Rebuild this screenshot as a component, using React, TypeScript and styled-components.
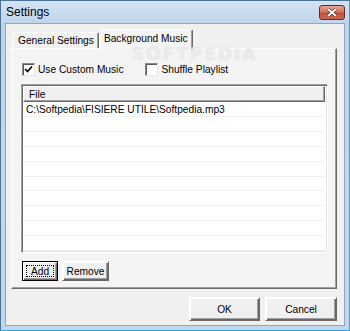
import React from 'react';
import styled, { createGlobalStyle } from 'styled-components';

const Global = createGlobalStyle`
  html, body { margin: 0; padding: 0; background: #ffffff; }
  body { font-family: Tahoma, "Liberation Sans", "DejaVu Sans", sans-serif; font-size: 10.2px; color: #000; }
  #root { width: 350px; height: 331px; }
`;

const Window = styled.div`
  position: relative;
  width: 350px;
  height: 331px;
  box-sizing: border-box;
  border: 1px solid #4b7397;
  border-right-color: #2fa6e0;
  border-bottom-color: #2fa6e0;
  background: linear-gradient(#d3e3f4, #bfd5ec 22px, #c2d7ee);
  display: flex;
  flex-direction: column;
  padding: 0 4px 4px 4px;
  overflow: hidden;
`;

const TitleBar = styled.div`
  height: 21px;
  display: flex;
  align-items: center;
  justify-content: space-between;
  padding: 0 0 1px 1px;
`;

const Title = styled.span`
  font-family: "Liberation Sans", "DejaVu Sans", sans-serif;
  font-size: 12px;
  color: #000;
`;

const CloseBtn = styled.div`
  width: 26px;
  height: 15px;
  box-sizing: border-box;
  border: 1px solid #5e2a26;
  border-radius: 3px;
  background: linear-gradient(#e8a898, #d8765f 45%, #c0503a 55%, #cf6a52);
  display: flex;
  align-items: center;
  justify-content: center;
  margin-top: 2px;
`;

const Client = styled.div`
  flex: 1;
  background: #f0f0f0;
  border: 1px solid #8ea6c0;
  display: flex;
  flex-direction: column;
  padding: 5px 7px 0 5px;
`;

const TabStrip = styled.div`
  display: flex;
  align-items: flex-end;
  height: 19px;
  padding-left: 1px;
  position: relative;
  z-index: 2;
`;

const Tab = styled.div<{ $active?: boolean }>`
  box-sizing: border-box;
  height: ${(p) => (p.$active ? '20px' : '16px')};
  margin-bottom: ${(p) => (p.$active ? '-1px' : '0')};
  padding: ${(p) => (p.$active ? '3px 4px 0 4px' : '2px 4px 0 5px')};
  background: ${(p) => (p.$active ? '#f4f4f4' : '#f0f0f0')};
  border-top: 1px solid #ffffff;
  border-left: 1px solid #ffffff;
  border-right: 1px solid #696969;
  box-shadow: inset -1px 0 0 #a0a0a0;
  border-radius: 2px 2px 0 0;
  white-space: nowrap;
  line-height: 12px;
`;

const Pane = styled.div`
  height: 241px;
  box-sizing: border-box;
  background: #f4f4f4;
  border-top: 1px solid #ffffff;
  border-left: 1px solid #ffffff;
  border-right: 1px solid #696969;
  border-bottom: 1px solid #696969;
  box-shadow: inset -1px -1px 0 #a0a0a0;
  padding: 14px 7px 0 9px;
  display: flex;
  flex-direction: column;
`;

const CheckRow = styled.div`
  display: flex;
  align-items: center;
  height: 13px;
  padding-left: 1px;
`;

const CheckItem = styled.label`
  display: flex;
  align-items: center;
  gap: 3px;
  margin-right: 22px;
`;

const Box = styled.span`
  width: 13px;
  height: 13px;
  box-sizing: border-box;
  background: #ffffff;
  border: 1px solid #8a8a8a;
  border-right-color: #e6e6e6;
  border-bottom-color: #e6e6e6;
  box-shadow: inset 1px 1px 0 #5a5a5a;
  display: flex;
  align-items: center;
  justify-content: center;
`;

const ListView = styled.div`
  margin-top: 8px;
  width: 307px;
  height: 169px;
  box-sizing: border-box;
  background: #ffffff;
  border: 1px solid #a0a0a0;
  border-right-color: #ffffff;
  border-bottom-color: #ffffff;
  box-shadow: inset 1px 1px 0 #696969, inset -1px -1px 0 #e3e3e3;
  padding: 1px 2px 1px 1px;
  display: flex;
  flex-direction: column;
`;

const Header = styled.div`
  height: 16px;
  box-sizing: border-box;
  background: #f0f0f0;
  border-top: 1px solid #ffffff;
  border-left: 1px solid #ffffff;
  border-right: 1px solid #696969;
  border-bottom: 1px solid #696969;
  box-shadow: inset -1px -1px 0 #a0a0a0;
  padding: 1px 0 0 5px;
  line-height: 13px;
`;

const Row = styled.div`
  height: 16px;
  box-sizing: border-box;
  border-bottom: 1px solid #f0f0f0;
  padding: 1px 0 0 3px;
  line-height: 13px;
  white-space: nowrap;
`;

const SmallButtons = styled.div`
  display: flex;
  gap: 4px;
  margin-top: 8px;
  padding-left: 1px;
`;

const Btn = styled.button<{ $w: number; $h: number; $default?: boolean }>`
  width: ${(p) => p.$w}px;
  height: ${(p) => p.$h}px;
  box-sizing: border-box;
  font: inherit;
  color: #000;
  background: #f0f0f0;
  border: 1px solid;
  box-shadow: inset 1px 1px 0 #fff, inset -1px -1px 0 #696969, inset -2px -2px 0 #a0a0a0;
  border-top-color: ${(p) => (p.$default ? '#000' : '#fff')};
  border-left-color: ${(p) => (p.$default ? '#000' : '#fff')};
  border-right-color: ${(p) => (p.$default ? '#000' : '#696969')};
  border-bottom-color: ${(p) => (p.$default ? '#000' : '#696969')};
  padding: 0;
  display: flex;
  align-items: center;
  justify-content: center;
  position: relative;
`;

const Focus = styled.span`
  position: absolute;
  inset: 3px;
  border: 1px dotted #000;
`;

const Footer = styled.div`
  display: flex;
  justify-content: flex-end;
  gap: 5px;
  margin-top: 8px;
`;

const Watermark = styled.div`
  position: absolute;
  left: 131px;
  top: 47px;
  font-family: "DejaVu Sans", sans-serif;
  font-weight: bold;
  font-size: 17px;
  line-height: 13px;
  letter-spacing: 2px;
  color: rgba(255, 255, 255, 0.55);
  text-shadow: 0 0 1px rgba(150, 150, 150, 0.35);
  pointer-events: none;
  z-index: 5;
`;

const Check = () => (
  <svg width="9" height="9" viewBox="0 0 9 9">
    <path d="M1 4 L3.5 6.5 L8 1.5" stroke="#000" strokeWidth="1.6" fill="none" />
  </svg>
);

const XIcon = () => (
  <svg width="12" height="9" viewBox="0 0 12 9">
    <path d="M2 1 L10 8 M10 1 L2 8" stroke="#3a1a16" strokeWidth="3" />
    <path d="M2 1 L10 8 M10 1 L2 8" stroke="#ffffff" strokeWidth="2" />
  </svg>
);

export default function App() {
  const rows = Array.from({ length: 9 });
  return (
    <>
      <Global />
      <Window>
        <TitleBar>
          <Title>Settings</Title>
          <CloseBtn>
            <XIcon />
          </CloseBtn>
        </TitleBar>
        <Client>
          <TabStrip>
            <Tab>General Settings</Tab>
            <Tab $active>Background Music</Tab>
          </TabStrip>
          <Pane>
            <CheckRow>
              <CheckItem>
                <Box>
                  <Check />
                </Box>
                Use Custom Music
              </CheckItem>
              <CheckItem>
                <Box />
                Shuffle Playlist
              </CheckItem>
            </CheckRow>
            <ListView>
              <Header>File</Header>
              <Row>C:\Softpedia\FISIERE UTILE\Softpedia.mp3</Row>
              {rows.map((_, i) => (
                <Row key={i} />
              ))}
            </ListView>
            <SmallButtons>
              <Btn $w={36} $h={20} $default>
                <Focus />
                Add
              </Btn>
              <Btn $w={47} $h={20}>
                Remove
              </Btn>
            </SmallButtons>
          </Pane>
          <Footer>
            <Btn $w={71} $h={24}>OK</Btn>
            <Btn $w={72} $h={24}>Cancel</Btn>
          </Footer>
        </Client>
        <Watermark>SOFTPEDIA</Watermark>
      </Window>
    </>
  );
}
